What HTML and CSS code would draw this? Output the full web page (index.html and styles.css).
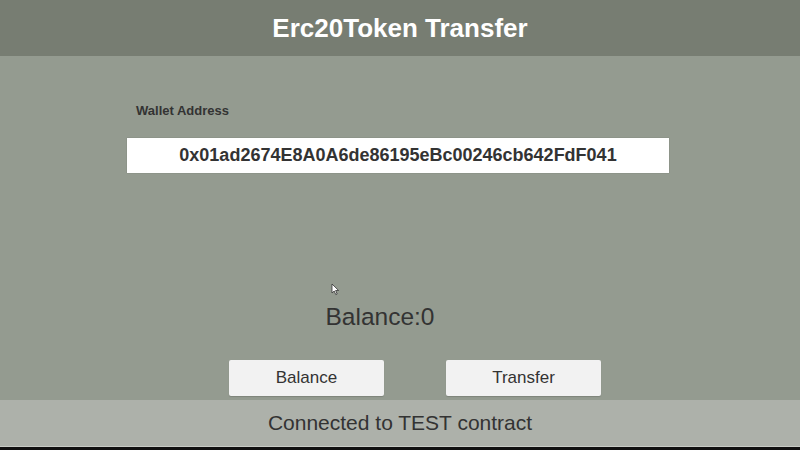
FILE: index.html
```html
<!DOCTYPE html>
<html>
<head>
<meta charset="utf-8">
<link rel="stylesheet" href="styles.css">
</head>
<body>
<div class="app">
  <header class="topbar"><h1 class="title">Erc20Token Transfer</h1></header>
  <main class="content">
    <div class="wallet">
      <div class="label">Wallet Address</div>
      <div class="address">0x01ad2674E8A0A6de86195eBc00246cb642FdF041</div>
    </div>
    <div class="balance">Balance:0</div>
    <div class="actions">
      <button class="btn">Balance</button>
      <button class="btn">Transfer</button>
    </div>
    <svg class="cursor" width="9" height="13" viewBox="0 0 9 13"><path d="M1 1 L1 10 L3.2 8 L4.8 11.6 L6.2 11 L4.6 7.5 L7.6 7.5 Z" fill="#fff" stroke="#333" stroke-width="0.8"/></svg>
  </main>
  <footer class="status">Connected to TEST contract</footer>
  <div class="edge"></div>
</div>
</body>
</html>
```
FILE: styles.css
```css
html, body { margin: 0; padding: 0; }
body { width: 800px; height: 450px; overflow: hidden; font-family: "Liberation Sans", Arial, sans-serif; background: #949b90; }
.app { display: flex; flex-direction: column; height: 450px; }
.topbar { height: 56px; flex-shrink: 0; background: #777d72; display: flex; align-items: center; justify-content: center; }
.title { margin: 0; color: #fff; font-size: 26px; font-weight: bold; }
.content { position: relative; flex: 1; display: flex; flex-direction: column; }
.wallet { padding: 47px 0 0 127px; }
.label { font-size: 13px; font-weight: bold; color: #333; padding-left: 9px; height: 15px; line-height: 15px; }
.address { margin-top: 20px; width: 542px; height: 35px; background: #fff; box-sizing: border-box; display: flex; align-items: center; justify-content: center; font-size: 18px; font-weight: bold; color: #333; box-shadow: 0 0 1px rgba(0,0,0,0.25); }
.balance { margin-top: 130px; height: 28px; line-height: 28px; text-align: center; padding-right: 40px; font-size: 24.5px; color: #333; }
.actions { margin-top: 29px; display: flex; gap: 62px; padding-left: 229px; }
.btn { width: 155px; height: 36px; border: none; border-radius: 2px; background: #f2f2f2; font-family: "Liberation Sans", Arial, sans-serif; font-size: 17px; color: #333; padding: 0; box-shadow: 0 1px 1px rgba(0,0,0,0.15); }
.cursor { position: absolute; left: 331px; top: 227px; }
.status { height: 46px; flex-shrink: 0; background: #adb1aa; display: flex; align-items: center; justify-content: center; font-size: 21px; color: #333; }
.edge { height: 4px; flex-shrink: 0; background: #111; border-top: 1px solid #c8cbc5; box-sizing: border-box; }
```
